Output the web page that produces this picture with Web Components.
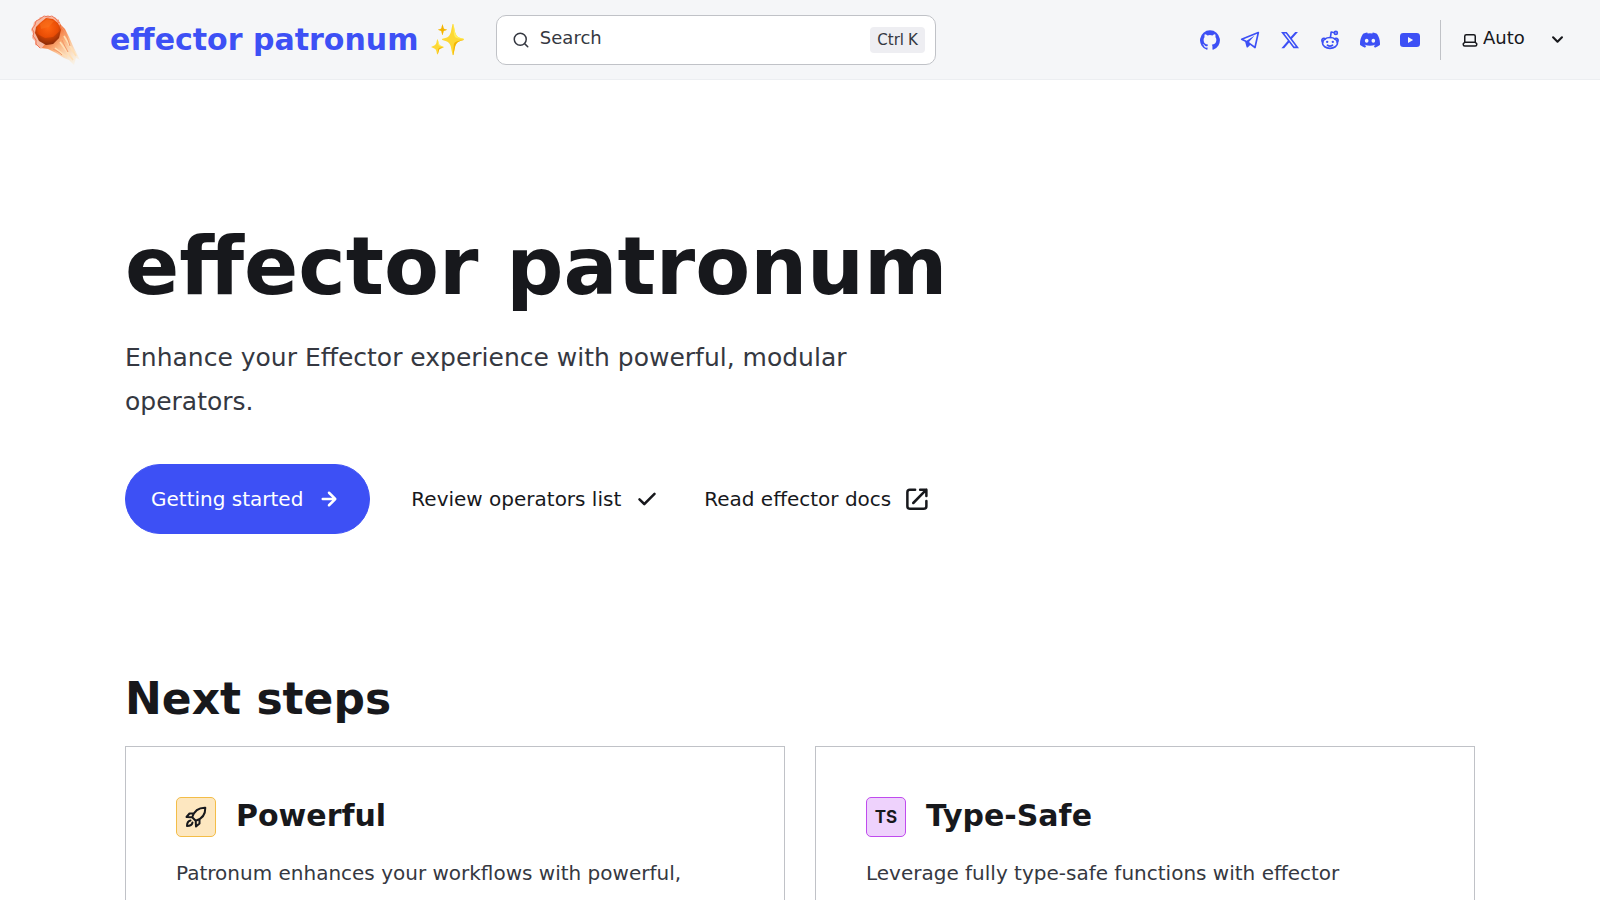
<!DOCTYPE html>
<html lang="en">
<head>
<meta charset="utf-8">
<meta name="viewport" content="width=device-width, initial-scale=1">
<title>effector patronum</title>
<style>
:root{
  --accent:#3d50f5; --ink:#17181c; --text:#353841; --line:#c0c2c7; --nav:#f5f6f8;
  font-family:"DejaVu Sans",sans-serif;
}
body{margin:0;background:#fff;color:var(--text);font-size:20px;line-height:35px}
</style>
</head>
<body>
<site-page>
  <site-header slot="header"></site-header>
  <hero-banner heading="effector patronum">
    Enhance your Effector experience with powerful, modular operators.
    <link-button slot="actions" primary href="#start" icon="arrow">Getting started</link-button>
    <link-button slot="actions" href="#operators" icon="check">Review operators list</link-button>
    <link-button slot="actions" href="#docs" icon="external">Read effector docs</link-button>
  </hero-banner>
  <card-section heading="Next steps">
    <info-card heading="Powerful" style="--badge:#fde7c0;--badge-line:#f3bd48">
      <site-icon slot="icon" name="rocket"></site-icon>
      Patronum enhances your workflows with powerful, modular Effector operators.
    </info-card>
    <info-card heading="Type-Safe" style="--badge:#eed2fc;--badge-line:#c04bee">
      <span slot="icon">TS</span>
      Leverage fully type-safe functions with effector patronum in your projects.
    </info-card>
  </card-section>
</site-page>
<script>
const define = (name, render) => customElements.define(name, class extends HTMLElement {
  connectedCallback() {
    if (!this.shadowRoot) this.attachShadow({mode: 'open'}).innerHTML = render(this);
  }
});

const icons = {
  github: '<path d="M12 .3a12 12 0 0 0-3.8 23.38c.6.12.83-.26.83-.57L9 21.07c-3.34.72-4.04-1.61-4.04-1.61-.55-1.39-1.34-1.76-1.34-1.76-1.08-.74.09-.73.09-.73 1.2.09 1.83 1.24 1.83 1.24 1.08 1.83 2.81 1.3 3.5 1 .1-.78.42-1.31.76-1.61-2.67-.3-5.47-1.33-5.47-5.93 0-1.31.47-2.38 1.24-3.22-.14-.3-.54-1.52.1-3.18 0 0 1-.32 3.3 1.23a11.5 11.5 0 0 1 6 0c2.28-1.55 3.29-1.23 3.29-1.23.64 1.66.24 2.88.12 3.18a4.65 4.65 0 0 1 1.23 3.22c0 4.61-2.8 5.63-5.48 5.92.42.36.81 1.1.81 2.22l-.01 3.29c0 .31.2.69.82.57A12 12 0 0 0 12 .3Z"/>',
  telegram: '<path fill="none" stroke="currentColor" stroke-width="2" stroke-linejoin="round" stroke-linecap="round" d="M22 3 2 11l5 2.600 1.800 6.400 3.200-3.300 6 4.300L22 3Z"/><path d="m7 13.500 10.500-7L11 14l1.500 2.700L8.800 20.500 7 13.500Z"/>',
  x: '<path d="M18.24 2.25h3.31l-7.23 8.26 8.5 11.24h-6.65l-5.21-6.82-5.97 6.82H1.68l7.73-8.84L1.25 2.25h6.83l4.71 6.23 5.45-6.23Zm-1.16 17.52h1.83L7.08 4.13H5.12l11.96 15.64Z"/>',
  reddit: '<g fill="none" stroke="currentColor" stroke-width="2" stroke-linecap="round" stroke-linejoin="round"><ellipse cx="12" cy="15.500" rx="9" ry="6.500"/><path d="M3.400 14.500A2.500 2.500 0 1 1 6.500 10.600M20.600 14.500A2.500 2.500 0 1 0 17.500 10.600M12.500 9l.9-6.600 4.100.9M9 18.300c1.800 1.200 4.200 1.200 6 0"/><circle cx="19" cy="3.500" r="1.800"/></g><circle cx="8.600" cy="14.200" r="1.400"/><circle cx="15.400" cy="14.200" r="1.400"/>',
  discord: '<path d="M20.32 4.37a19.8 19.8 0 0 0-4.89-1.52.07.07 0 0 0-.08.04c-.21.38-.44.86-.6 1.25a18.3 18.3 0 0 0-5.5 0c-.16-.4-.4-.87-.61-1.25a.08.08 0 0 0-.08-.04 19.7 19.7 0 0 0-4.89 1.52C.53 9.05-.32 13.58.1 18.06c0 .02.01.04.03.06a19.9 19.9 0 0 0 6 3.03.08.08 0 0 0 .08-.03c.46-.63.87-1.3 1.22-2a.08.08 0 0 0-.04-.1 13 13 0 0 1-1.87-.89.08.08 0 0 1-.01-.13l.37-.29a.07.07 0 0 1 .08-.01c3.93 1.79 8.18 1.79 12.06 0a.07.07 0 0 1 .08.01l.37.29a.08.08 0 0 1-.01.13c-.6.35-1.22.64-1.87.89a.08.08 0 0 0-.04.1c.36.7.77 1.37 1.22 2a.08.08 0 0 0 .09.03 19.8 19.8 0 0 0 6-3.03.08.08 0 0 0 .03-.06c.5-5.17-.84-9.67-3.55-13.66ZM8.02 15.33c-1.18 0-2.16-1.09-2.16-2.42s.96-2.42 2.16-2.42c1.21 0 2.18 1.1 2.16 2.42 0 1.33-.96 2.42-2.16 2.42Zm7.97 0c-1.18 0-2.15-1.09-2.15-2.42s.95-2.42 2.15-2.42c1.21 0 2.18 1.1 2.16 2.42 0 1.33-.95 2.42-2.16 2.42Z"/>',
  youtube: '<path d="M4 3.5h16a4 4 0 0 1 4 4v9a4 4 0 0 1-4 4H4a4 4 0 0 1-4-4v-9a4 4 0 0 1 4-4Zm5.600 5v7l6.100-3.500-6.100-3.500Z"/>',
  search: '<path fill="none" stroke="currentColor" stroke-width="2" stroke-linecap="round" d="m21 21-4.200-4.200M19 11a8 8 0 1 1-16 0 8 8 0 0 1 16 0Z"/>',
  laptop: '<path fill="none" stroke="currentColor" stroke-width="2" stroke-linejoin="round" d="M5 15V7a2 2 0 0 1 2-2h10a2 2 0 0 1 2 2v8l2 2v1a2 2 0 0 1-2 2H5a2 2 0 0 1-2-2v-1l2-2Zm0 0h14"/>',
  caret: '<path d="M17 9.17a1 1 0 0 0-1.41 0L12 12.71 8.46 9.17a1 1 0 1 0-1.41 1.42l4.24 4.24a1 1 0 0 0 1.42 0L17 10.59a1 1 0 0 0 0-1.42Z"/>',
  arrow: '<path d="M17.92 11.62a1 1 0 0 0-.21-.33l-5-5a1 1 0 1 0-1.42 1.42l3.300 3.290H7a1 1 0 0 0 0 2h7.590l-3.300 3.290a1 1 0 1 0 1.420 1.420l5-5a1 1 0 0 0 .21-1.09Z"/>',
  check: '<path d="M18.71 7.21a1 1 0 0 0-1.42 0l-7.45 7.46-3.13-3.14A1 1 0 1 0 5.29 13l3.84 3.84a1 1 0 0 0 1.42 0l8.16-8.16a1 1 0 0 0 0-1.47Z"/>',
  external: '<path fill="none" stroke="currentColor" stroke-width="2" stroke-linecap="round" stroke-linejoin="round" d="M10.500 4.500H6.300a2 2 0 0 0-2 2v11.200a2 2 0 0 0 2 2h11.200a2 2 0 0 0 2-2v-4.200M9 15.200 19.500 4.500M14.500 4.500h5v5"/>',
  rocket: '<path fill="none" stroke="currentColor" stroke-width="2" stroke-linecap="round" stroke-linejoin="round" d="M8.2 12.3C10 6.500 14 2.500 21.300 2.700 21.500 10 17.500 14 11.700 15.800L8.200 12.300ZM9.500 8.500H5.500L2.500 12l5.700.3M15.500 14.500v4L12 21.500l-.3-5.700M6.500 15.500C4 16 3 18 3 21c3 0 5-1 5.500-3.500"/>'
};

define('site-icon', el => `
<style>
:host{display:inline-flex;flex:none;width:var(--icon,24px);height:var(--icon,24px)}
svg{width:100%;height:100%;fill:currentColor}
</style>
<svg viewBox="0 0 24 24" aria-hidden="true">${icons[el.getAttribute('name')]}</svg>`);

define('comet-logo', () => `
<style>:host{display:block;flex:none;width:60px;height:60px}svg{display:block;width:100%;height:100%}</style>
<svg viewBox="-1 -2 60 60" aria-hidden="true">
<defs>
<linearGradient id="tail" gradientUnits="userSpaceOnUse" x1="20" y1="22" x2="46" y2="52"><stop stop-color="#f26a30"/><stop offset=".35" stop-color="#fbb27c"/><stop offset="1" stop-color="#ffe9bd" stop-opacity=".2"/></linearGradient>
<radialGradient id="rock" cx=".5" cy=".35" r=".65"><stop stop-color="#ff6511"/><stop offset=".6" stop-color="#e84c05"/><stop offset="1" stop-color="#8e2c09"/></radialGradient>
</defs>
<path fill="url(#tail)" d="M10 36 27 7 30 13 34 17 38 25 42 34 49 48 45 46 43 53 38 48 33 46 25 41 17 37Z"/>
<path fill="#f7b9a2" d="m10 37-3-3-3-1 0-4-3-3 1-4-2-4 2-4 1-4 4-2 2-3 4 0 4-2 3 2 4 0 3 3 2 4-5 10-10 10Z"/>
<path fill="none" stroke="#ee7354" d="m9 36-4-4v-4l-3-4 1-4-2-3 3-4 1-4 4-2 4-3 4 1 4-1 4 3 3 4"/>
<path fill="none" stroke="#ffdfb4" stroke-width="1.500" d="m29 30 13 18M33 24l12 20M24 36l12 9"/>
<path fill="none" stroke="#f39568" d="M30 14c4 5 7 13 9 20M22 37c4 2 6 3 9 6M31 28c2 5 4 8 6 12"/>
<path fill="url(#rock)" d="m9 11 6-5 7 1 5 4 3 7-2 8-6 6-7 1-7-4-4-8 1-6Z"/>
<path fill="#fa7620" opacity=".5" d="m9 12 7-5 7 2-5 6-8 2Z"/>
<path fill="#7e2808" opacity=".3" d="m6 22 8 4 8-1 7-6-1 7-6 6-7 1-7-5Z"/>
</svg>`);

define('search-box', () => `
<style>
:host{display:block;width:440px;flex:0 1 440px}
button{box-sizing:border-box;width:100%;height:50px;display:flex;align-items:center;gap:10px;padding:0 10px 0 15px;background:#fff;border:1px solid var(--line);border-radius:10px;color:var(--text);font:18px/24px "DejaVu Sans",sans-serif;cursor:pointer;--icon:18px}
.label{padding-bottom:4px}
.keys{display:flex;gap:4px;margin-left:auto;padding:0 7px;background:#eeeef2;border-radius:4px;font-size:15px;line-height:26px}
kbd{font-family:inherit}
</style>
<button type="button"><site-icon name="search"></site-icon><span class="label">Search</span><span class="keys"><kbd>Ctrl</kbd><kbd>K</kbd></span></button>`);

define('theme-select', () => `
<style>
:host{display:block;color:var(--ink)}
label{display:flex;align-items:center;--icon:18px}
.caret{--icon:25px}
select{appearance:none;border:0;background:none;color:inherit;font:18px/24px "DejaVu Sans",sans-serif;padding:0 0 4px;margin:0 0 0 4px;width:62px}
</style>
<label><site-icon name="laptop"></site-icon><select aria-label="Select theme"><option>Auto</option><option>Dark</option><option>Light</option></select><site-icon class="caret" name="caret"></site-icon></label>`);

define('site-header', () => `
<style>
:host{display:block;background:var(--nav);border-bottom:1px solid #eceef1}
header{box-sizing:border-box;height:79px;display:flex;align-items:center;padding:0 30px}
.brand{display:flex;align-items:center;gap:20px;color:var(--accent);text-decoration:none;font-weight:700;font-size:30px;line-height:36px;white-space:nowrap;margin-right:30px}
.end{display:flex;align-items:center;margin-left:auto}
nav{display:flex;gap:20px;--icon:20px;padding-right:20px;margin-right:20px;border-right:1px solid var(--line);height:40px;align-items:center}
nav a{display:flex;color:var(--accent)}
</style>
<header>
<a class="brand" href="#"><comet-logo></comet-logo><span>effector patronum ✨</span></a>
<search-box></search-box>
<div class="end">
<nav aria-label="Social">${['github','telegram','x','reddit','discord','youtube'].map(n => `<a href="#${n}" aria-label="${n}"><site-icon name="${n}"></site-icon></a>`).join('')}</nav>
<theme-select></theme-select>
</div>
</header>`);

define('site-page', () => `
<style>
:host{display:block}
main{max-width:1350px;margin:0 auto;padding:0 30px}
</style>
<slot name="header"></slot><main><slot></slot></main>`);

define('link-button', el => `
<style>
:host{display:block}
a{display:flex;align-items:center;gap:11px;color:var(--ink);text-decoration:none;font-size:20px;line-height:24px;padding:19px 0;border:1px solid transparent;white-space:nowrap}
:host([primary]) a{background:var(--accent);border-color:var(--accent);color:#fff;border-radius:999px;padding:19px 25px}
site-icon{--icon:30px}
</style>
<a href="${el.getAttribute('href')}"><slot></slot><site-icon name="${el.getAttribute('icon')}"></site-icon></a>`);

define('hero-banner', el => `
<style>
:host{display:block;padding:139px 0 138px}
h1{margin:0;color:var(--ink);font-size:80px;line-height:96px;font-weight:700}
p{margin:21px 0 0;font-size:25px;line-height:44px;max-width:800px}
.actions{display:flex;flex-wrap:wrap;gap:40px;margin-top:40px}
</style>
<h1>${el.getAttribute('heading')}</h1><p><slot></slot></p><div class="actions"><slot name="actions"></slot></div>`);

define('card-section', el => `
<style>
:host{display:block}
h2{margin:0 0 20px;color:var(--ink);font-size:44px;line-height:54px;font-weight:700}
div{display:grid;grid-template-columns:1fr 1fr;gap:30px}
</style>
<h2>${el.getAttribute('heading')}</h2><div><slot></slot></div>`);

define('info-card', el => `
<style>
:host{display:block;border:1px solid var(--line);padding:50px}
header{display:flex;align-items:center;gap:20px}
.badge{box-sizing:border-box;width:40px;height:40px;display:flex;align-items:center;justify-content:center;background:var(--badge);border:1px solid var(--badge-line);border-radius:5px;color:#17181c;font:700 17px/24px Inter,sans-serif}
h3{margin:0;color:var(--ink);font-size:30px;line-height:36px;font-weight:700;padding-bottom:2px}
p{margin:19px 0 0;font-size:20px;line-height:35px}
</style>
<header><span class="badge"><slot name="icon"></slot></span><h3>${el.getAttribute('heading')}</h3></header><p><slot></slot></p>`);
</script>
</body>
</html>
